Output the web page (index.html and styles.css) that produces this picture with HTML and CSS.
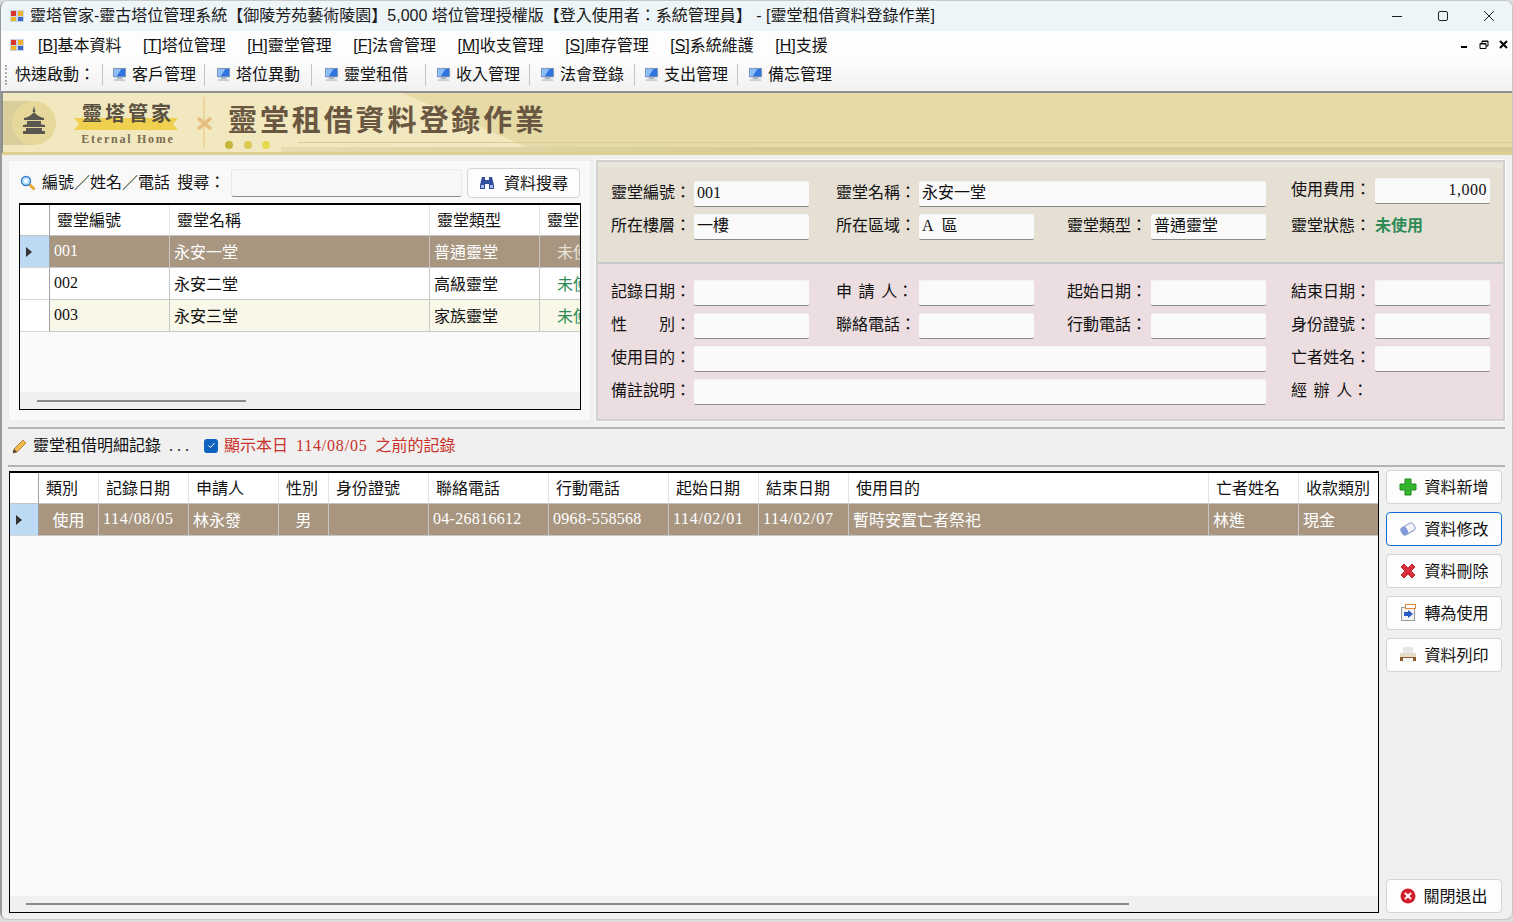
FILE: index.html
```html
<!DOCTYPE html>
<html lang="zh-Hant">
<head>
    <meta charset="UTF-8">
    <title>靈堂租借資料登錄作業</title>
    <link rel="stylesheet" href="styles.css">
</head>
<body>
<svg class="defs" width="0" height="0">
    <defs>
        <symbol id="app" viewBox="0 0 14 14">
            <rect x="0" y="1" width="14" height="12" fill="#c9d6e8"/>
            <rect x="1" y="2" width="5" height="5" fill="#d8362a"/>
            <rect x="8" y="2" width="5" height="5" fill="#f0b429"/>
            <rect x="1" y="8" width="5" height="4" fill="#f0b429"/>
            <rect x="8" y="8" width="5" height="4" fill="#3a66c4"/>
        </symbol>
        <symbol id="monitor" viewBox="0 0 16 16">
            <rect x="1" y="1" width="14" height="10" fill="#8c9cb4"/>
            <rect x="2" y="2" width="12" height="8" fill="#2f74e0"/>
            <path d="M2 2h8L5 10H2z" fill="#8fbcf5"/>
            <rect x="5" y="11" width="6" height="2" fill="#a9b0ba"/>
            <rect x="2" y="13" width="12" height="2" fill="#c9ced6"/>
        </symbol>
    </defs>
</svg>
<div class="window">
    <div class="titlebar">
        <svg class="app-icon"><use href="#app"/></svg>
        <span class="title-text">靈塔管家-靈古塔位管理系統【御陵芳苑藝術陵園】5,000 塔位管理授權版【登入使用者：系統管理員】 - [靈堂租借資料登錄作業]</span>
        <div class="win-btns">
            <svg width="12" height="12" viewBox="0 0 12 12"><path d="M1 6.500h10" stroke="#222" fill="none"/></svg>
            <svg width="12" height="12" viewBox="0 0 12 12"><rect x="1.500" y="1.500" width="9" height="9" rx="1.500" stroke="#222" fill="none"/></svg>
            <svg width="12" height="12" viewBox="0 0 12 12"><path d="M1 1l10 10M11 1L1 11" stroke="#222" fill="none"/></svg>
        </div>
    </div>

    <div class="menubar">
        <svg class="app-icon"><use href="#app"/></svg>
        <ul class="menu">
            <li>[<u>B</u>]基本資料</li>
            <li>[<u>T</u>]塔位管理</li>
            <li>[<u>H</u>]靈堂管理</li>
            <li>[<u>F</u>]法會管理</li>
            <li>[<u>M</u>]收支管理</li>
            <li>[<u>S</u>]庫存管理</li>
            <li>[<u>S</u>]系統維護</li>
            <li>[<u>H</u>]支援</li>
        </ul>
        <div class="mdi-btns">
            <svg width="9" height="9" viewBox="0 0 9 9"><rect x="1" y="6" width="6" height="2" fill="#000"/></svg>
            <svg width="10" height="10" viewBox="0 0 10 10"><path d="M3 1h6v5H7M1 3.500h6v5H1z M3 1v2.500" stroke="#000" fill="none"/><path d="M3 1.500h6M1 4h6" stroke="#000" fill="none"/></svg>
            <svg width="9" height="9" viewBox="0 0 9 9"><path d="M1 1l7 7M8 1L1 8" stroke="#000" stroke-width="2" fill="none"/></svg>
        </div>
    </div>

    <div class="toolbar">
        <span class="grip"></span>
        <span class="quick">快速啟動：</span>
        <a class="tool"><svg><use href="#monitor"/></svg><span>客戶管理</span></a>
        <a class="tool"><svg><use href="#monitor"/></svg><span>塔位異動</span></a>
        <a class="tool"><svg><use href="#monitor"/></svg><span>靈堂租借</span></a>
        <a class="tool"><svg><use href="#monitor"/></svg><span>收入管理</span></a>
        <a class="tool"><svg><use href="#monitor"/></svg><span>法會登錄</span></a>
        <a class="tool"><svg><use href="#monitor"/></svg><span>支出管理</span></a>
        <a class="tool"><svg><use href="#monitor"/></svg><span>備忘管理</span></a>
    </div>

    <div class="banner">
        <svg class="banner-art" width="1510" height="59" viewBox="0 0 1510 59">
            <defs>
                <linearGradient id="strip">
                    <stop offset="0" stop-color="#e6dcb0"/>
                    <stop offset=".4" stop-color="#d5ca97"/>
                </linearGradient>
            </defs>
            <rect width="1510" height="59" fill="#f2e8c0"/>
            <path d="M399 0H1510V59H535z" fill="#e6daa7"/>
            <rect x="0" y="8" width="30" height="44" fill="#d9cf9c"/>
            <rect x="278" y="54" width="1232" height="5" fill="url(#strip)"/>
            <path d="M295 49.500H1510" stroke="#d9cd9a" fill="none"/>
            <circle cx="31" cy="30" r="22" fill="#e6d89a"/>
            <path d="M31 13l1.500 6h-3zM21 25q6-1 10-6q4 5 10 6v2H21zM24 28h14v3H24zM20 32q6-1 11-2q5 1 11 2v2H20zM23 35h16v3H23zM20 38h22v3H20z" fill="#5a5650"/>
            <path d="M71 25H175L170 31L175 37H71L76 31z" fill="#f0d04f"/>
            <path d="M201 4V54" stroke="#ecd69c" stroke-width="2" fill="none"/>
            <path d="M195 25l13 11M208 25l-13 11" stroke="#e6bd80" stroke-width="3.500" fill="none"/>
            <circle cx="226" cy="52" r="4" fill="#c6b53c"/>
            <circle cx="245" cy="52" r="4" fill="#d6c850"/>
            <circle cx="263" cy="52" r="4" fill="#e4d94f"/>
        </svg>
        <div class="brand">
            <span class="brand-name">靈塔管家</span>
            <span class="brand-en">Eternal Home</span>
        </div>
        <h1 class="page-title">靈堂租借資料登錄作業</h1>
    </div>

    <div class="top">
        <div class="search-panel">
            <div class="search-row">
                <svg class="search-icon" width="16" height="16" viewBox="0 0 16 16">
                    <path d="M9.500 9.500l5 5" stroke="#e8a832" stroke-width="3" fill="none"/>
                    <circle cx="6" cy="6" r="4.500" fill="#bfe3fb" stroke="#3a7fd0" stroke-width="1.500"/>
                    <path d="M4 6h4M6 4v4" stroke="#fff" stroke-width="1.500" fill="none"/>
                </svg>
                <label class="search-label">編號／姓名／電話&nbsp; 搜尋：</label>
                <span class="search-input"></span>
                <button class="btn search-btn">
                    <svg width="16" height="14" viewBox="0 0 16 14">
                        <path d="M3 1h3v3h4V1h3l2 8v4H10V8H6v5H1V9z" fill="#2f4f9c"/>
                        <path d="M2 9h3v3H2zM11 9h3v3h-3z" fill="#a8bde6"/>
                    </svg>
                    <span>資料搜尋</span>
                </button>
            </div>
            <div class="grid small-grid">
                <table>
                    <thead>
                        <tr>
                            <th class="c-head"></th>
                            <th class="s-no">靈堂編號</th>
                            <th class="s-name">靈堂名稱</th>
                            <th class="s-type">靈堂類型</th>
                            <th class="s-state">靈堂狀態</th>
                        </tr>
                    </thead>
                    <tbody>
                        <tr class="selected">
                            <td class="row-head"><i class="caret"></i></td>
                            <td>001</td><td>永安一堂</td><td>普通靈堂</td><td class="state">未使用</td>
                        </tr>
                        <tr>
                            <td class="row-head"></td>
                            <td>002</td><td>永安二堂</td><td>高級靈堂</td><td class="state">未使用</td>
                        </tr>
                        <tr class="alt">
                            <td class="row-head"></td>
                            <td>003</td><td>永安三堂</td><td>家族靈堂</td><td class="state">未使用</td>
                        </tr>
                    </tbody>
                </table>
                <div class="hscroll small-scroll"><span class="thumb"></span></div>
            </div>
        </div>

        <div class="detail-panel">
            <div class="form form-room">
                <label>靈堂編號：</label><span class="field">001</span>
                <label class="c2">靈堂名稱：</label><span class="field span3">永安一堂</span>
                <label class="c4 raised">使用費用：</label><span class="field fee raised">1,000</span>

                <label>所在樓層：</label><span class="field">一樓</span>
                <label class="c2">所在區域：</label><span class="field">A&nbsp;&nbsp;區</span>
                <label class="c3">靈堂類型：</label><span class="field">普通靈堂</span>
                <label class="c4">靈堂狀態：</label><span class="status">未使用</span>
            </div>
            <div class="form form-rent">
                <label>記錄日期：</label><span class="field"></span>
                <label class="c2 spaced">申 請 人：</label><span class="field"></span>
                <label class="c3">起始日期：</label><span class="field"></span>
                <label class="c4">結束日期：</label><span class="field"></span>

                <label>性&emsp;&emsp;別：</label><span class="field"></span>
                <label class="c2">聯絡電話：</label><span class="field"></span>
                <label class="c3">行動電話：</label><span class="field"></span>
                <label class="c4">身份證號：</label><span class="field"></span>

                <label>使用目的：</label><span class="field span5"></span>
                <label class="c4">亡者姓名：</label><span class="field"></span>

                <label>備註說明：</label><span class="field span5"></span>
                <label class="c4 spaced">經 辦 人：</label>
            </div>
        </div>
    </div>

    <div class="records-head">
        <svg width="16" height="16" viewBox="0 0 16 16">
            <path d="M2 11L11 2l3 3-9 9-4 1z" fill="#f0b84a" stroke="#a8742a" stroke-width=".8"/>
            <path d="M1 15l1-4 3 3z" fill="#444"/>
        </svg>
        <span class="records-title">靈堂租借明細記錄 <span class="dots">...</span></span>
        <span class="check">
            <svg width="11" height="11" viewBox="0 0 11 11"><path d="M2.500 5.500l2 2 4-4.500" stroke="#fff" fill="none"/></svg>
        </span>
        <span class="records-note">顯示本日 <span class="date">114/08/05</span> 之前的記錄</span>
    </div>

    <div class="bottom">
        <div class="grid big-grid">
            <table>
                <thead>
                    <tr>
                        <th class="c-head"></th>
                        <th class="b-kind">類別</th>
                        <th class="b-date">記錄日期</th>
                        <th class="b-date">申請人</th>
                        <th class="b-sex">性別</th>
                        <th class="b-id">身份證號</th>
                        <th class="b-tel">聯絡電話</th>
                        <th class="b-tel">行動電話</th>
                        <th class="b-date">起始日期</th>
                        <th class="b-date">結束日期</th>
                        <th class="b-goal">使用目的</th>
                        <th class="b-date">亡者姓名</th>
                        <th class="b-pay">收款類別</th>
                    </tr>
                </thead>
                <tbody>
                    <tr class="selected">
                        <td class="row-head"><i class="caret"></i></td>
                        <td class="center">使用</td>
                        <td class="date">114/08/05</td>
                        <td>林永發</td>
                        <td class="center">男</td>
                        <td></td>
                        <td class="tel">04-26816612</td>
                        <td class="tel">0968-558568</td>
                        <td class="date">114/02/01</td>
                        <td class="date">114/02/07</td>
                        <td>暫時安置亡者祭祀</td>
                        <td>林進</td>
                        <td>現金</td>
                    </tr>
                </tbody>
            </table>
            <div class="hscroll big-scroll"><span class="thumb"></span></div>
        </div>

        <div class="actions">
            <button class="btn">
                <svg width="18" height="18" viewBox="0 0 18 18"><path d="M6 1h6v5h5v6h-5v5H6v-5H1V6h5z" fill="#35b52e" stroke="#1f8a1f"/></svg>
                <span>資料新增</span>
            </button>
            <button class="btn focused">
                <svg width="18" height="18" viewBox="0 0 18 18">
                    <g transform="rotate(-30 9 9)">
                        <rect x="2" y="5" width="14" height="8" rx="2.500" fill="#f4f6fc" stroke="#8ea2cc"/>
                        <rect x="2" y="5" width="6" height="8" rx="2.500" fill="#7f9bd8"/>
                    </g>
                </svg>
                <span>資料修改</span>
            </button>
            <button class="btn">
                <svg width="18" height="18" viewBox="0 0 18 18"><path d="M2 5l3-3 4 4 4-4 3 3-4 4 4 4-3 3-4-4-4 4-3-3 4-4z" fill="#d8303a" stroke="#c02830"/></svg>
                <span>資料刪除</span>
            </button>
            <button class="btn">
                <svg width="18" height="18" viewBox="0 0 18 18">
                    <rect x="2.500" y="3.500" width="13" height="13" fill="#f2f2f2" stroke="#9a9a9a"/>
                    <rect x="6.500" y="0.500" width="10" height="4" fill="#fff" stroke="#e08a3c"/>
                    <path d="M5 8h4V6l5 4-5 4v-2H5z" fill="#2c58c8"/>
                </svg>
                <span>轉為使用</span>
            </button>
            <button class="btn">
                <svg width="18" height="18" viewBox="0 0 18 18">
                    <rect x="4" y="1" width="10" height="7" fill="#e6e6e6"/>
                    <rect x="1" y="7" width="16" height="4" fill="#e8dccb"/>
                    <rect x="1" y="11" width="16" height="4" fill="#8f5a2c"/>
                    <rect x="4" y="12" width="10" height="5" fill="#f4f4f4"/>
                </svg>
                <span>資料列印</span>
            </button>
            <button class="btn close-btn">
                <svg width="16" height="16" viewBox="0 0 16 16"><circle cx="8" cy="8" r="7.500" fill="#cf1f2a"/><path d="M5 5l6 6M11 5l-6 6" stroke="#fff" stroke-width="2" fill="none"/></svg>
                <span>關閉退出</span>
            </button>
        </div>
    </div>
</div>
</body>
</html>
```

FILE: styles.css
```css
* {
    margin: 0;
    padding: 0;
    box-sizing: border-box;
}
html, body {
    width: 1513px;
    height: 922px;
    overflow: hidden;
}
body {
    font-family: "Liberation Serif", "Noto Sans CJK TC", serif;
    font-size: 16px;
    color: #111;
    background: #dcdcdc;
}
ul {
    list-style: none;
}
.defs {
    display: block;
    height: 0;
}

.window {
    width: 1513px;
    height: 920px;
    display: flex;
    flex-direction: column;
    border: 1px solid #c8c8c8;
    border-left-color: #9a9a9a;
    border-radius: 8px;
    overflow: hidden;
    background: linear-gradient(90deg, #9a9a9a 1px, #f0f0f0 1px);
}

/* title bar */
.titlebar {
    height: 30px;
    flex: none;
    display: flex;
    align-items: center;
    padding-left: 9px;
    background: #eef5f9;
}
.app-icon {
    width: 14px;
    height: 14px;
    flex: none;
}
.title-text {
    margin-left: 6px;
    padding-bottom: 4px;
    font-family: "Liberation Sans", "Noto Sans CJK TC", sans-serif;
    font-size: 16px;
    white-space: nowrap;
    color: #1a1a1a;
}
.win-btns {
    margin-left: auto;
    display: flex;
    gap: 34px;
    padding-right: 17px;
}

/* menu */
.menubar {
    height: 27px;
    flex: none;
    display: flex;
    align-items: center;
    padding-left: 9px;
    background: #fdfdfd;
}
.menu {
    display: flex;
    gap: 21.500px;
    margin-left: 14px;
    padding-bottom: 2px;
    font-family: "Liberation Sans", "Noto Sans CJK TC", sans-serif;
}
.menu li {
    white-space: nowrap;
}
.mdi-btns {
    margin-left: auto;
    display: flex;
    align-items: center;
    gap: 10px;
    padding-right: 4px;
}

/* quick toolbar */
.toolbar {
    height: 35px;
    flex: none;
    display: flex;
    align-items: center;
    padding-left: 4px;
    background: linear-gradient(#fdfdfd, #f1f1f1);
    border-bottom: 2px solid #8f8f8f;
    font-family: "Noto Sans CJK TC", sans-serif;
}
.grip {
    width: 2px;
    height: 20px;
    border-left: 2px dotted #a8a8a8;
}
.quick {
    margin-left: 8px;
    width: 87px;
    padding-bottom: 3px;
    white-space: nowrap;
}
.tool {
    display: flex;
    align-items: center;
    gap: 5px;
    height: 22px;
    padding: 0 8px 0 9px;
    line-height: 18px;
    border-left: 1px solid #c4c4c4;
    white-space: nowrap;
}
.tool svg {
    width: 15px;
    height: 15px;
}
.tool span {
    padding-bottom: 3px;
}
.tool:nth-child(4) { padding: 0 11px; }
.tool:nth-child(5) { padding: 0 17px 0 12px; }
.tool:nth-child(6) { padding: 0 9px 0 10px; }
.tool:nth-child(7) { padding: 0 10px; }
.tool:nth-child(8) { padding: 0 9px; }
.tool:nth-child(9) { padding: 0 10px; }

/* banner */
.banner {
    height: 62px;
    flex: none;
    display: flex;
    align-items: center;
    position: relative;
    border-bottom: 3px solid #dccf90;
    border-left: 2px solid #8f8f8f;
    background: #f2e8c0;
    overflow: hidden;
}
.banner-art {
    position: absolute;
    left: 0;
    top: 0;
}
.brand {
    position: relative;
    width: 152px;
    margin-left: 49px;
    margin-right: 24px;
    padding-top: 3px;
    display: flex;
    flex-direction: column;
    align-items: center;
    font-family: "Noto Sans CJK TC", sans-serif;
    color: #5a5040;
}
.brand-name {
    font-size: 20px;
    line-height: 24px;
    font-weight: 700;
    letter-spacing: 3px;
}
.brand-en {
    margin-top: 5px;
    font-family: "Liberation Serif", serif;
    font-size: 12px;
    font-weight: 700;
    letter-spacing: 1.750px;
    line-height: 18px;
    color: #7a6c52;
}
.page-title {
    position: relative;
    margin-bottom: 10px;
    font-family: "Noto Sans CJK TC", sans-serif;
    font-size: 29px;
    font-weight: 700;
    letter-spacing: 2.900px;
    color: #6a5741;
    white-space: nowrap;
}

/* top area */
.top {
    height: 266px;
    flex: none;
    display: flex;
    gap: 5px;
    padding: 5px 7px 0 7px;
}
.search-panel {
    width: 583px;
    height: 261px;
    padding: 7px 10px 0 10px;
    background: #f9f9f9;
    border: 1px solid #ededed;
}
.search-row {
    height: 35px;
    display: flex;
    align-items: flex-start;
    font-family: "Noto Sans CJK TC", sans-serif;
}
.search-icon {
    margin-top: 7px;
    margin-left: 1px;
    flex: none;
}
.search-label {
    margin-left: 6px;
    width: 190px;
    white-space: nowrap;
    line-height: 26px;
}
.search-input {
    width: 231px;
    height: 28px;
    margin-top: 1px;
    flex: none;
    background: #f7f7f7;
    border: 1px solid #e8e8e8;
    border-bottom: 1px solid #8a8a8a;
    border-radius: 3px;
}
.btn {
    display: flex;
    align-items: center;
    justify-content: center;
    gap: 9px;
    font-family: "Noto Sans CJK TC", sans-serif;
    font-size: 16px;
    color: #111;
    background: #fdfdfd;
    border: 1px solid #d4d4d4;
    border-radius: 4px;
}
.btn span {
    padding-bottom: 3px;
}
.search-btn {
    width: 113px;
    height: 30px;
    margin-left: 5px;
    flex: none;
}

/* data grids */
.grid {
    background: #fafafa;
    border: 1px solid #000;
    border-top-width: 2px;
    position: relative;
    overflow: hidden;
    display: flex;
    flex-direction: column;
    justify-content: space-between;
}
.grid table {
    table-layout: fixed;
    border-collapse: separate;
    border-spacing: 0;
    font-family: "Liberation Serif", "Noto Sans CJK TC", serif;
}
.grid th {
    height: 31px;
    background: #fff;
    font-weight: 400;
    text-align: left;
    padding: 0 0 3px 7px;
    white-space: nowrap;
    overflow: hidden;
    border-right: 1px solid #e4e4e4;
    border-bottom: 1px solid #c4c4c4;
    font-family: "Noto Sans CJK TC", sans-serif;
}
.grid td {
    height: 32px;
    padding: 0 0 1px 4px;
    white-space: nowrap;
    overflow: hidden;
    background: #fff;
    border-right: 1px solid #c8c8c8;
    border-bottom: 1px solid #c8c8c8;
}
.grid td.center {
    text-align: center;
    padding-left: 0;
}
.grid td.date {
    letter-spacing: .7px;
}
.grid td.tel {
    letter-spacing: .3px;
}
.grid .c-head {
    width: 30px;
    padding: 0;
    border-right: 1px solid #a0a0a0;
}
.grid td.row-head {
    padding: 0 0 0 6px;
    background: #fff;
    border-right: 1px solid #a0a0a0;
    border-bottom: 1px solid #d8d8d8;
}
.caret {
    display: block;
    width: 0;
    height: 0;
    border-left: 6px solid #333;
    border-top: 5px solid transparent;
    border-bottom: 5px solid transparent;
}
.grid tr.selected td {
    background: #a89680;
    color: #fff;
}
.grid tr.selected td.row-head {
    background: #bcdaf3;
}
.grid tr.alt td {
    background: #f8f7e8;
}
.grid tr.alt td.row-head {
    background: #fff;
}
.grid .state {
    color: #2e8b57;
    padding-left: 17px;
}
.grid tr.selected .state {
    color: #e8e2d8;
}
.hscroll {
    height: 17px;
    flex: none;
    background: #f0f0f0;
    display: flex;
    align-items: center;
}
.thumb {
    display: block;
    height: 2px;
    background: #8a8a8a;
}
.small-grid {
    width: 562px;
    height: 207px;
}
.small-grid table { width: 621px; }
.s-no { width: 120px; }
.s-name { width: 260px; }
.s-type { width: 110px; }
.s-state { width: 101px; }
.small-scroll .thumb {
    width: 209px;
    margin-left: 17px;
}

/* detail form */
.detail-panel {
    width: 910px;
    height: 261px;
    display: flex;
    flex-direction: column;
    border: 2px solid #d0d0d0;
    outline: 1px solid #fafafa;
}
.form {
    display: grid;
    grid-template-columns: 83px 115px 110px 115px 117px 115px 109px 115px;
    row-gap: 7px;
    align-content: start;
    padding-left: 13px;
    font-family: "Noto Sans CJK TC", sans-serif;
}
.form label {
    white-space: nowrap;
    line-height: 21px;
    height: 26px;
}
.form .c2 { padding-left: 27px; }
.form .c3 { padding-left: 33px; }
.form .c4 { padding-left: 25px; }
.form .spaced { word-spacing: 3px; }
.form-room {
    height: 102px;
    flex: none;
    padding-top: 19px;
    background: #e5dfd4;
    border-bottom: 2px solid #c8c8c8;
    box-shadow: inset 0 6px 0 #e9e4da;
}
.form-rent {
    flex: 1;
    padding-top: 16px;
    background: #ebdde0;
}
.field {
    height: 26px;
    padding: 0 3px;
    line-height: 21px;
    background: #fafafa;
    border-bottom: 1px solid #8a8a8a;
    border-top: 1px solid #f2f2f2;
    border-radius: 2px;
    white-space: nowrap;
    font-family: "Liberation Serif", "Noto Sans CJK TC", serif;
}
.form-room .span3 { grid-column: span 3; }
.form-rent .span5 { grid-column: span 5; }
.field.fee {
    text-align: right;
    letter-spacing: .5px;
}
.raised {
    position: relative;
    top: -3px;
}
.status {
    color: #2e8b57;
    font-weight: 700;
    line-height: 21px;
}

/* records */
.records-head {
    height: 40px;
    flex: none;
    margin: 6px 7px 0 7px;
    padding: 0 0 3px 4px;
    display: flex;
    align-items: center;
    border-top: 2px solid #b4b4b4;
    border-bottom: 2px solid #b4b4b4;
}
.records-title {
    margin-left: 5px;
    width: 171px;
    padding-bottom: 4px;
    white-space: nowrap;
}
.dots {
    letter-spacing: 4px;
    margin-left: 4px;
}
.check {
    width: 14px;
    height: 14px;
    display: flex;
    align-items: center;
    justify-content: center;
    background: #0f62c0;
    border-radius: 3px;
}
.records-note {
    margin-left: 6px;
    padding-bottom: 4px;
    color: #c8322a;
    word-spacing: 4px;
}
.records-note .date {
    letter-spacing: .8px;
}

.bottom {
    flex: 1;
    display: flex;
    padding: 4px 10px 6px 8px;
    gap: 7px;
}
.big-grid {
    width: 1370px;
    height: 442px;
}
.big-grid table { width: 1369px; }
.big-grid .c-head { width: 29px; }
.b-kind { width: 60px; }
.b-date { width: 90px; }
.b-sex { width: 50px; }
.b-id { width: 100px; }
.b-tel { width: 120px; }
.b-goal { width: 360px; }
.b-pay { width: 80px; }
.big-scroll {
    height: 16px;
}
.big-scroll .thumb {
    width: 1103px;
    margin-left: 16px;
}
.actions {
    width: 116px;
    margin-top: -1px;
    display: flex;
    flex-direction: column;
    gap: 8px;
}
.actions .btn {
    height: 34px;
    gap: 7px;
    border-radius: 4px;
}
.actions .btn svg {
    flex: none;
}
.btn.focused {
    border: 1px solid #0a6fd0;
}
.actions .close-btn {
    margin-top: auto;
}
```
